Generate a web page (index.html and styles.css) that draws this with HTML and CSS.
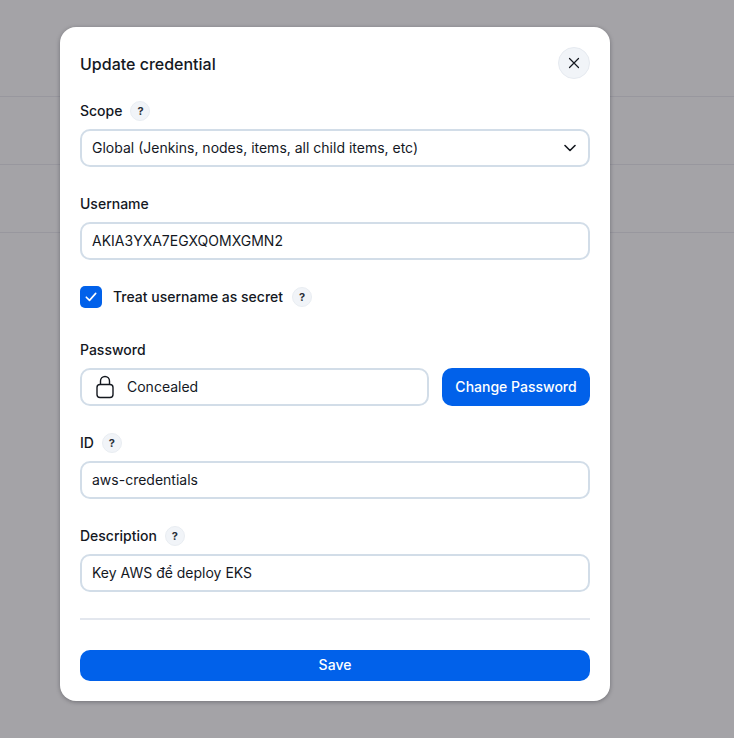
FILE: index.html
```html
<!DOCTYPE html>
<html lang="en">
<head>
<meta charset="utf-8">
<title>Update credential</title>
<link rel="stylesheet" href="styles.css">
</head>
<body>
<div class="page">
  <div class="row"></div>
  <div class="row"></div>
  <div class="row"></div>
</div>
<div class="backdrop"></div>
<form class="modal">
  <header class="modal-head">
    <h2 class="modal-title">Update credential</h2>
    <button type="button" class="close" aria-label="Close">
      <svg width="12" height="12" viewBox="0 0 12 12" fill="none"><path d="M1.5 1.5l9 9M10.5 1.5l-9 9" stroke="#14181f" stroke-width="1.2" stroke-linecap="round"/></svg>
    </button>
  </header>

  <div class="field scope">
    <div class="label">Scope <span class="help">?</span></div>
    <div class="control select">
      <span>Global (Jenkins, nodes, items, all child items, etc)</span>
      <svg width="12" height="8" viewBox="0 0 12 8" fill="none"><path d="M1 1.5l5 5 5-5" stroke="#14181f" stroke-width="1.6" stroke-linecap="round" stroke-linejoin="round"/></svg>
    </div>
  </div>

  <div class="field">
    <div class="label">Username</div>
    <div class="control">AKIA3YXA7EGXQOMXGMN2</div>
  </div>

  <div class="check-row">
    <span class="checkbox">
      <svg width="12" height="10" viewBox="0 0 12 10" fill="none"><path d="M1.3 5.2l3.2 3.2 6.2-7" stroke="#fff" stroke-width="1.6" stroke-linecap="round" stroke-linejoin="round"/></svg>
    </span>
    <span class="check-text">Treat username as secret</span>
    <span class="help">?</span>
  </div>

  <div class="field password">
    <div class="label">Password</div>
    <div class="password-row">
      <div class="control concealed">
        <svg width="18" height="24" viewBox="0 0 18 24" fill="none"><rect x="1" y="9.5" width="16" height="13" rx="3" stroke="#14181f" stroke-width="1.4"/><path d="M4.5 9.5V6a4.5 4.5 0 0 1 9 0v3.5" stroke="#14181f" stroke-width="1.4"/></svg>
        <span>Concealed</span>
      </div>
      <button type="button" class="btn change">Change Password</button>
    </div>
  </div>

  <div class="field id">
    <div class="label">ID <span class="help">?</span></div>
    <div class="control">aws-credentials</div>
  </div>

  <div class="field desc">
    <div class="label">Description <span class="help">?</span></div>
    <div class="control">Key AWS để deploy EKS</div>
  </div>

  <hr class="divider">
  <button type="button" class="btn save">Save</button>
</form>
</body>
</html>
```
FILE: styles.css
```css
* { box-sizing: border-box; }
html, body { margin: 0; height: 100%; }
body {
  position: relative;
  overflow: hidden;
  background: #fff;
  font-family: Inter, "Noto Sans", "Liberation Sans", sans-serif;
  font-size: 14px;
  line-height: 20px;
  color: #14181f;
}
.page { padding-top: 29px; }
.row { height: 68px; border-bottom: 1.5px solid #ecebf0; }
.backdrop { position: absolute; inset: 0; background: rgba(20, 18, 28, .39); }
.modal {
  position: absolute;
  left: 60px;
  top: 27px;
  width: 550px;
  height: 674px;
  padding: 20px;
  display: flex;
  flex-direction: column;
  background: #fff;
  border-radius: 16px;
  box-shadow: 0 1px 4px rgba(20, 20, 30, .35);
}
.modal-head { display: flex; justify-content: space-between; align-items: center; height: 32px; }
.modal-title { margin: 0; font-size: 16px; line-height: 24px; font-weight: 500; position: relative; top: 1px; }
.close {
  width: 32px;
  height: 32px;
  padding: 0;
  display: flex;
  align-items: center;
  justify-content: center;
  background: #f1f4f8;
  border: 1px solid #e6eaf0;
  border-radius: 50%;
}
.field { display: flex; flex-direction: column; gap: 8px; }
.scope { margin-top: 22px; }
.field + .field { margin-top: 27px; }
.field.password { margin-top: 32px; }
.field.id { margin-top: 27px; }
.field.desc { margin-top: 27px; }
.label { display: flex; align-items: center; gap: 8px; height: 20px; font-weight: 500; }
.help {
  width: 20px;
  height: 20px;
  display: inline-flex;
  align-items: center;
  justify-content: center;
  background: #f1f4f8;
  border: 1px solid #e9edf2;
  border-radius: 50%;
  font-size: 11px;
  font-weight: 700;
  color: #2a3038;
}
.control {
  height: 38px;
  padding: 0 10px;
  display: flex;
  align-items: center;
  background: #fff;
  border: 2px solid #d2dde8;
  border-radius: 10px;
}
.select { justify-content: space-between; padding-right: 12px; }
.check-row { display: flex; align-items: center; margin-top: 26px; height: 22px; }
.checkbox {
  width: 22px;
  height: 22px;
  margin-right: 11px;
  display: flex;
  align-items: center;
  justify-content: center;
  background: #0161ea;
  border-radius: 5px;
}
.check-text { font-weight: 500; margin-right: 9px; }
.password-row { display: flex; gap: 13px; }
.concealed { flex: 1; gap: 13px; padding-left: 14px; }
.btn {
  height: 38px;
  padding: 0;
  border: 0;
  border-radius: 10px;
  background: #0161ea;
  color: #fff;
  font: 500 14px/20px Inter, "Noto Sans", "Liberation Sans", sans-serif;
}
.change { width: 148px; }
.divider { width: 100%; height: 2px; margin: 26px 0 30px; border: 0; background: #e3e7ee; }
.save { width: 100%; }
```
